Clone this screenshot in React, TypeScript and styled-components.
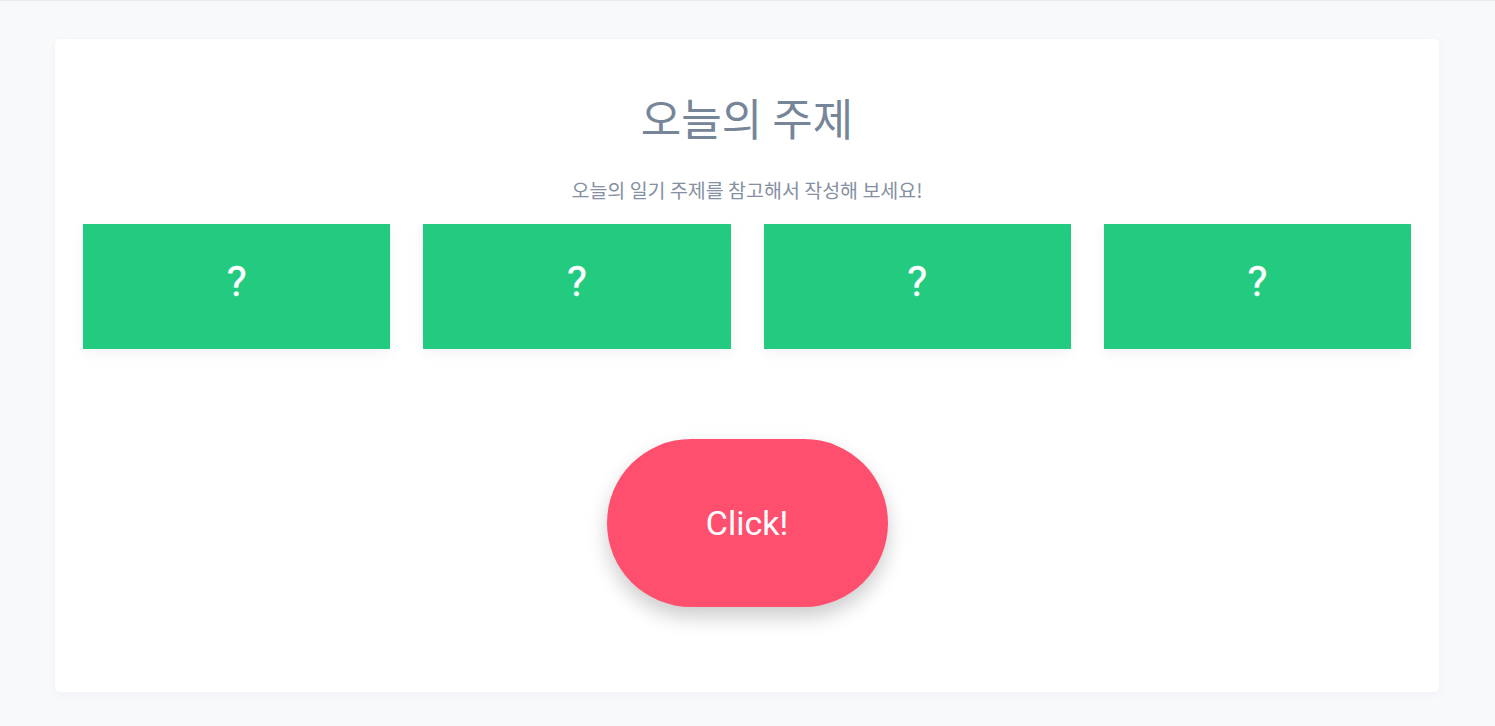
import React from "react";
import styled, { createGlobalStyle } from "styled-components";

const GlobalStyle = createGlobalStyle`
  html, body {
    margin: 0;
    padding: 0;
    background: #f8f9fb;
  }
  body {
    border-top: 1px solid #e8ebef;
    font-family: "Noto Sans CJK KR", "Noto Sans", sans-serif;
  }
`;

const Page = styled.main`
  padding: 38px 56px 34px 55px;
`;

const Card = styled.section`
  background: #ffffff;
  border-radius: 5px;
  box-shadow: 0 2px 10px rgba(30, 50, 90, 0.04);
  padding: 54px 28px 85px;
  display: flex;
  flex-direction: column;
  align-items: center;
`;

const Title = styled.h1`
  margin: 0;
  font-family: "Noto Sans CJK KR", "Noto Sans", sans-serif;
  font-size: 44px;
  line-height: 48px;
  font-weight: 400;
  color: #778599;
`;

const Subtitle = styled.p`
  margin: 36px 0 0;
  font-family: "Noto Sans CJK KR", "Noto Sans", sans-serif;
  font-size: 19.5px;
  line-height: 26px;
  color: #8590a2;
`;

const TopicGrid = styled.div`
  margin-top: 21px;
  align-self: stretch;
  display: grid;
  grid-template-columns: repeat(4, 1fr);
  gap: 33px;
`;

const TopicCard = styled.div`
  height: 125px;
  background: #23cb80;
  box-shadow: 0 4px 12px rgba(30, 50, 90, 0.06);
  display: flex;
  align-items: center;
  justify-content: center;
  padding-bottom: 10px;
  box-sizing: border-box;
  color: #ffffff;
  font-family: Roboto, "Liberation Sans", sans-serif;
  font-weight: 400;
  font-size: 42px;
  -webkit-text-stroke: 0.4px #ffffff;
`;

const ClickButton = styled.button`
  margin-top: 90px;
  width: 281px;
  height: 168px;
  border: none;
  border-radius: 84px;
  background: #ff4f6f;
  color: #ffffff;
  font-family: Roboto, "Liberation Sans", sans-serif;
  font-size: 34px;
  box-shadow: 0 10px 20px rgba(0, 0, 0, 0.2);
  cursor: pointer;
`;

export default function App() {
  return (
    <>
      <GlobalStyle />
      <Page>
        <Card>
          <Title>오늘의 주제</Title>
          <Subtitle>오늘의 일기 주제를 참고해서 작성해 보세요!</Subtitle>
          <TopicGrid>
            {[0, 1, 2, 3].map((i) => (
              <TopicCard key={i}>?</TopicCard>
            ))}
          </TopicGrid>
          <ClickButton>Click!</ClickButton>
        </Card>
      </Page>
    </>
  );
}
